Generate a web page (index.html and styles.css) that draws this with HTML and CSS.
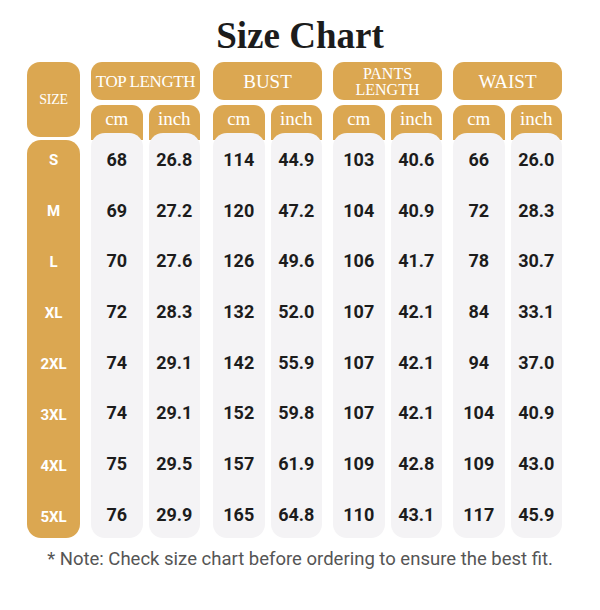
FILE: index.html
```html
<!DOCTYPE html>
<html lang="en">
<head>
<meta charset="utf-8">
<title>Size Chart</title>
<link rel="stylesheet" href="styles.css">
</head>
<body>
<div class="page">
  <h1 class="title">Size Chart</h1>
  <div class="chart">
    <div class="size-col">
      <div class="size-head">SIZE</div>
      <div class="size-body">
        <div class="size-list">
          <div class="size-cell">S</div>
          <div class="size-cell">M</div>
          <div class="size-cell">L</div>
          <div class="size-cell">XL</div>
          <div class="size-cell">2XL</div>
          <div class="size-cell">3XL</div>
          <div class="size-cell">4XL</div>
          <div class="size-cell">5XL</div>
        </div>
      </div>
    </div>

    <div class="group">
      <div class="group-head small">TOP LENGTH</div>
      <div class="subcols">
        <div class="subcol">
          <div class="sub-head">cm</div>
          <div class="values"><div class="v">68</div><div class="v">69</div><div class="v">70</div><div class="v">72</div><div class="v">74</div><div class="v">74</div><div class="v">75</div><div class="v">76</div></div>
        </div>
        <div class="subcol">
          <div class="sub-head">inch</div>
          <div class="values"><div class="v">26.8</div><div class="v">27.2</div><div class="v">27.6</div><div class="v">28.3</div><div class="v">29.1</div><div class="v">29.1</div><div class="v">29.5</div><div class="v">29.9</div></div>
        </div>
      </div>
    </div>

    <div class="group wide-gap">
      <div class="group-head">BUST</div>
      <div class="subcols">
        <div class="subcol">
          <div class="sub-head">cm</div>
          <div class="values"><div class="v">114</div><div class="v">120</div><div class="v">126</div><div class="v">132</div><div class="v">142</div><div class="v">152</div><div class="v">157</div><div class="v">165</div></div>
        </div>
        <div class="subcol">
          <div class="sub-head">inch</div>
          <div class="values"><div class="v">44.9</div><div class="v">47.2</div><div class="v">49.6</div><div class="v">52.0</div><div class="v">55.9</div><div class="v">59.8</div><div class="v">61.9</div><div class="v">64.8</div></div>
        </div>
      </div>
    </div>

    <div class="group">
      <div class="group-head two">PANTS<br>LENGTH</div>
      <div class="subcols">
        <div class="subcol">
          <div class="sub-head">cm</div>
          <div class="values"><div class="v">103</div><div class="v">104</div><div class="v">106</div><div class="v">107</div><div class="v">107</div><div class="v">107</div><div class="v">109</div><div class="v">110</div></div>
        </div>
        <div class="subcol">
          <div class="sub-head">inch</div>
          <div class="values"><div class="v">40.6</div><div class="v">40.9</div><div class="v">41.7</div><div class="v">42.1</div><div class="v">42.1</div><div class="v">42.1</div><div class="v">42.8</div><div class="v">43.1</div></div>
        </div>
      </div>
    </div>

    <div class="group">
      <div class="group-head">WAIST</div>
      <div class="subcols">
        <div class="subcol">
          <div class="sub-head">cm</div>
          <div class="values"><div class="v">66</div><div class="v">72</div><div class="v">78</div><div class="v">84</div><div class="v">94</div><div class="v">104</div><div class="v">109</div><div class="v">117</div></div>
        </div>
        <div class="subcol">
          <div class="sub-head">inch</div>
          <div class="values"><div class="v">26.0</div><div class="v">28.3</div><div class="v">30.7</div><div class="v">33.1</div><div class="v">37.0</div><div class="v">40.9</div><div class="v">43.0</div><div class="v">45.9</div></div>
        </div>
      </div>
    </div>
  </div>
  <p class="note">* Note: Check size chart before ordering to ensure the best fit.</p>
</div>
</body>
</html>
```

FILE: styles.css
```css
* { box-sizing: border-box; }

html, body {
  margin: 0;
  padding: 0;
  background: #ffffff;
}

.page {
  width: 600px;
  height: 610px;
  padding-top: 17px;
}

.title {
  margin: 0;
  font-family: "Liberation Serif", serif;
  font-weight: 700;
  font-size: 37px;
  line-height: 37px;
  text-align: center;
  color: #1c1c1c;
}

.chart {
  display: flex;
  align-items: flex-start;
  margin-top: 8px;
  padding-left: 27px;
  gap: 11px;
}

.size-col {
  width: 53px;
  display: flex;
  flex-direction: column;
  gap: 3px;
}

.size-head {
  height: 75px;
  background: #dba751;
  border-radius: 13px;
  display: flex;
  align-items: center;
  justify-content: center;
  color: #ffffff;
  font-family: "Liberation Serif", serif;
  font-size: 14px;
  letter-spacing: -0.3px;
}

.size-body {
  height: 398px;
  background: #dba751;
  border-radius: 14px;
}

.size-list {
  margin-top: -6px;
  display: grid;
  grid-template-rows: repeat(8, 51px);
}

.size-cell {
  display: flex;
  align-items: center;
  justify-content: center;
  color: #ffffff;
  font-family: Roboto, "Liberation Sans", sans-serif;
  font-weight: 700;
  font-size: 15px;
}

.group {
  width: 109px;
  display: flex;
  flex-direction: column;
  gap: 5px;
}

.group.wide-gap {
  margin-left: 2px;
}

.group-head {
  height: 38px;
  background: #dba751;
  border-radius: 11px;
  display: flex;
  align-items: center;
  justify-content: center;
  text-align: center;
  color: #ffffff;
  font-family: "Liberation Serif", serif;
  font-size: 19px;
  line-height: 1;
}

.group-head.small {
  font-size: 17px;
  letter-spacing: -0.4px;
  white-space: nowrap;
}

.group-head.two {
  font-size: 16px;
  line-height: 16px;
  padding-top: 1px;
}

.subcols {
  display: flex;
  gap: 6px;
}

.subcol {
  flex: 1;
  display: flex;
  flex-direction: column;
}

.sub-head {
  height: 35px;
  padding-bottom: 8px;
  background: #dba751;
  border-radius: 11px 11px 0 0;
  display: flex;
  align-items: center;
  justify-content: center;
  color: #ffffff;
  font-family: "Liberation Serif", serif;
  font-size: 19px;
}

.values {
  position: relative;
  margin-top: -7px;
  height: 405px;
  padding-top: 1px;
  background: #f4f3f5;
  border-radius: 14px;
  display: grid;
  grid-template-rows: repeat(8, 50.7px);
}

.v {
  display: flex;
  align-items: center;
  justify-content: center;
  color: #1c1c1c;
  font-family: Roboto, "Liberation Sans", sans-serif;
  font-weight: 700;
  font-size: 18px;
}

.note {
  margin: 11px 0 0;
  text-align: center;
  font-family: Roboto, "Liberation Sans", sans-serif;
  font-size: 18.5px;
  line-height: 20px;
  color: #555555;
}
```
